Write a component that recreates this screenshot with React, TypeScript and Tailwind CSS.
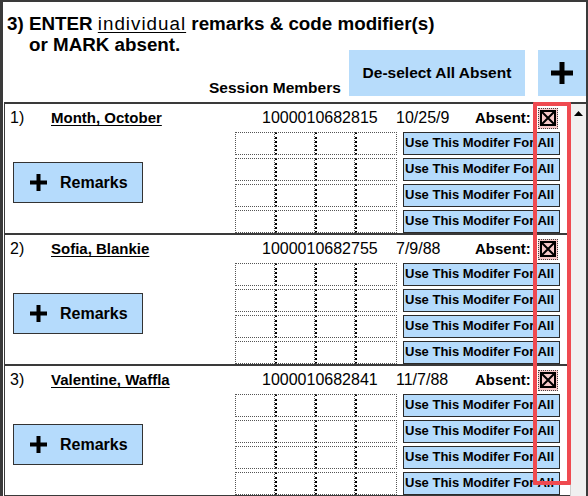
const members = [
  { no: '1)', name: 'Month, October', id: '1000010682815', dob: '10/25/9' },
  { no: '2)', name: 'Sofia, Blankie', id: '1000010682755', dob: '7/9/88' },
  { no: '3)', name: 'Valentine, Waffla', id: '1000010682841', dob: '11/7/88' },
];

function Plus({ size, bar }: { size: number; bar: number }) {
  const a = (size - bar) / 2;
  const b = a + bar;
  return (
    <svg width={size} height={size} viewBox={`0 0 ${size} ${size}`}>
      <path
        d={`M${a} 0H${b}V${a}H${size}V${b}H${b}V${size}H${a}V${b}H0V${a}H${a}Z`}
        fill="#000"
      />
    </svg>
  );
}

function AbsentBox() {
  return (
    <div className="flex h-[21px] w-[20px] items-center justify-center border border-dotted border-[#444] bg-[#f6c9c9]">
      <svg width="16" height="16" viewBox="0 0 16 16">
        <rect x="1" y="1" width="14" height="14" fill="none" stroke="#000" strokeWidth="2" />
        <path d="M2 2L14 14M14 2L2 14" stroke="#000" strokeWidth="2" />
      </svg>
    </div>
  );
}

function ModifierRow() {
  const widths = ['w-[40px]', 'w-[40px]', 'w-[40px]', 'w-[42px]'];
  return (
    <div className="flex h-[23px]">
      {widths.map((w, i) => (
        <div
          key={i}
          className={`${w} h-full border border-dotted border-[#555] ${i > 0 ? 'border-l-2 border-l-[#000]' : ''}`}
        />
      ))}
      <div className="ml-[6px] h-full w-[157px] overflow-hidden whitespace-nowrap border-[1.5px] border-[#2b2b2b] bg-[#b5dbfc] pl-[1px] text-[13px] font-bold leading-[20px]">
        Use This Modifer For All
      </div>
    </div>
  );
}

function MemberRow({ m }: { m: (typeof members)[number] }) {
  return (
    <div className="h-[131px] shrink-0 border-b-2 border-[#3a3a3a]">
      {/* Top line */}
      <div className="flex h-[28px] items-center pl-[5px] text-[16px] leading-[18px]">
        <span className="w-[41px]">{m.no}</span>
        <span className="w-[211px] text-[15px] font-bold underline underline-offset-2">{m.name}</span>
        <span className="w-[134px]">{m.id}</span>
        <span className="w-[79px]">{m.dob}</span>
        <span className="w-[63px] text-[15px] font-bold">Absent:</span>
        <AbsentBox />
      </div>

      {/* Remarks + modifiers */}
      <div className="flex">
        <div className="flex w-[230px] items-center">
          <div className="ml-[8px] flex h-[41px] w-[130px] items-center border-[1.5px] border-[#333] bg-[#b5dbfc] pl-[16px]">
            <Plus size={17} bar={4} />
            <span className="ml-[13px] text-[16px] font-bold">Remarks</span>
          </div>
        </div>
        <div className="flex flex-col gap-[3px]">
          <ModifierRow />
          <ModifierRow />
          <ModifierRow />
          <ModifierRow />
        </div>
      </div>
    </div>
  );
}

export default function App() {
  return (
    <div className="relative h-[496px] w-[588px] overflow-hidden border-l-[3px] border-r-2 border-t-2 border-[#3a3a3a] bg-white font-['Liberation_Sans',Arial,sans-serif] text-black">
      {/* Title */}
      <div className="h-[48px] pl-[4px] pt-[11px] text-[18.8px] font-bold leading-[21px]">
        <div>
          3) ENTER <span className="font-normal tracking-[1px] underline underline-offset-2">individual</span> remarks &amp; code modifier(s)
        </div>
        <div className="pl-[22px]">or MARK absent.</div>
      </div>

      {/* Toolbar */}
      <div className="flex h-[46px]">
        <div className="flex w-[347px] items-end justify-end pr-[8px] text-[15.5px] font-bold leading-[17px]">
          Session Members
        </div>
        <div className="flex w-[177px] items-center justify-center bg-[#b7dcfb] text-[15.5px] font-bold">
          De-select All Absent
        </div>
        <div className="ml-[13px] flex w-[48px] items-center justify-center bg-[#b7dcfb]">
          <Plus size={22} bar={5} />
        </div>
      </div>

      {/* Member list */}
      <div className="ml-[1px] mt-[6px] flex h-[400px] border-l border-t-2 border-[#3a3a3a]">
        <div className="flex w-[565px] flex-col">
          {members.map((m) => (
            <MemberRow key={m.id} m={m} />
          ))}
        </div>
        <div className="flex w-[16px] flex-col items-center border-l border-[#cfcfcf] bg-[#f0f0f0] pt-[7px]">
          <svg width="9" height="5" viewBox="0 0 9 5">
            <path d="M4.5 0L9 5H0Z" fill="#000" />
          </svg>
        </div>
      </div>

      {/* Highlight */}
      <div className="absolute left-[530px] top-[100px] h-[383px] w-[38px] rounded-[1px] border-[4px] border-[#ef4a50]" />
    </div>
  );
}
